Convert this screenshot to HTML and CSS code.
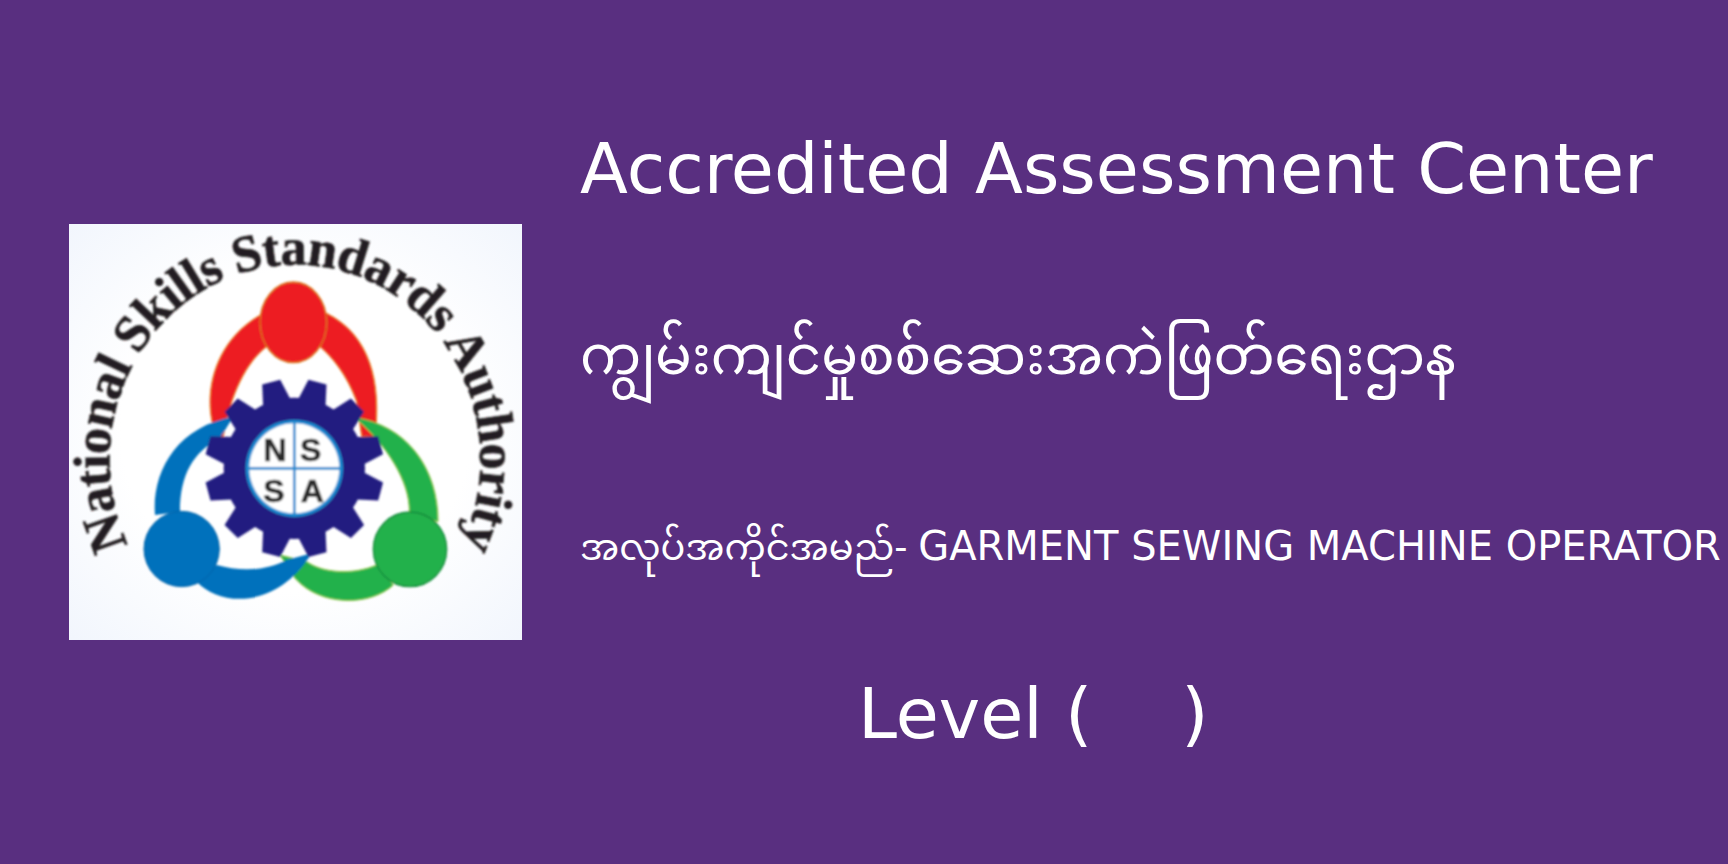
FILE: index.html

```html
<!DOCTYPE html>
<html lang="en">
<head>
  <meta charset="UTF-8">
  <meta name="viewport" content="width=device-width, initial-scale=1.0">
  <title>Accredited Assessment Center</title>
  <link rel="stylesheet" href="styles.css">
</head>
<body>

<div class="banner">
  <svg class="logo" viewBox="27 27 1359 1248" role="img" aria-label="National Skills Standards Authority">
    <defs>
      <radialGradient id="logo-bg" cx="50%" cy="50%" r="70%">
        <stop offset="55%" stop-color="#ffffff"/>
        <stop offset="100%" stop-color="#f2f6fd"/>
      </radialGradient>
      <filter id="soft" x="-5%" y="-5%" width="110%" height="110%">
        <feGaussianBlur stdDeviation="2.8"/>
      </filter>
      <path id="logo-arc" d="M 205 990 A 556 585 0 1 1 1205 990"/>
      <polygon id="gear-teeth" points="675,492 731,492 745,555 745,965 731,1028 675,1028 661,965 661,555"/>
    </defs>
    <rect x="27" y="27" width="1359" height="1248" fill="url(#logo-bg)"/>
    <g filter="url(#soft)">
      <text class="logo-name"><textPath href="#logo-arc">National Skills Standards Authority</textPath></text>

      <!-- red figure -->
      <path fill="#ed1c24" stroke="#e8821e" stroke-width="3" d="M470 665C425 560 450 380 610 295L800 295C930 360 965 500 945 665L905 665L890 560C860 480 820 430 780 395L620 395C560 440 510 540 490 665Z"/>
      <ellipse cx="700" cy="322" rx="100" ry="121" fill="#ed1c24" stroke="#d9761c" stroke-width="4"/>

      <!-- green figure -->
      <path fill="#22b14c" stroke="#8cc63f" stroke-width="3" d="M885 608C1040 630 1135 760 1134 920L1048 890C1050 800 980 690 885 608Z"/>
      <path fill="#22b14c" stroke="#8cc63f" stroke-width="3" d="M1000 1110C930 1175 780 1175 705 1090L660 1020L740 1040C790 1075 880 1080 950 1050Z"/>
      <ellipse cx="1050" cy="1003" rx="110" ry="112" fill="#22b14c" stroke="#178a3a" stroke-width="4"/>

      <!-- blue figure -->
      <path fill="#0071bc" d="M520 605C350 635 275 770 285 900L360 890C360 780 400 710 480 670Z"/>
      <path fill="#0071bc" d="M410 1100C480 1175 650 1185 755 1015L680 1035C620 1068 540 1070 470 1050Z"/>
      <ellipse cx="365" cy="1002" rx="113" ry="113" fill="#0071bc" stroke="#0a62a8" stroke-width="3"/>

      <!-- gear -->
      <g fill="#231f80">
        <circle cx="703" cy="760" r="212"/>
        <use href="#gear-teeth" transform="rotate(15 703 760)"/>
        <use href="#gear-teeth" transform="rotate(45 703 760)"/>
        <use href="#gear-teeth" transform="rotate(75 703 760)"/>
        <use href="#gear-teeth" transform="rotate(105 703 760)"/>
        <use href="#gear-teeth" transform="rotate(135 703 760)"/>
        <use href="#gear-teeth" transform="rotate(165 703 760)"/>
      </g>
      <circle cx="703" cy="760" r="146" fill="#1c8ad0"/>
      <circle cx="703" cy="760" r="135" fill="#ffffff"/>
      <path d="M703 620V900M563 760H843" stroke="#1c8ad0" stroke-width="8"/>
      <g class="logo-letters">
        <text x="645" y="737">N</text>
        <text x="752" y="737">S</text>
        <text x="642" y="860">S</text>
        <text x="757" y="860">A</text>
      </g>
    </g>
  </svg>

  <div class="info">
    <h1 class="title">Accredited Assessment Center</h1>
    <h2 class="title-mm">ကျွမ်းကျင်မှုစစ်ဆေးအကဲဖြတ်ရေးဌာန</h2>
    <p class="occupation"><span class="occupation-label">အလုပ်အကိုင်အမည်-</span> GARMENT SEWING MACHINE OPERATOR</p>
    <p class="level">Level (&nbsp;&nbsp;&nbsp;&nbsp;)</p>
  </div>
</div>

</body>
</html>
```

FILE: styles.css

```css
body {
  margin: 0;
  background: #592f80;
  color: #ffffff;
  font-family: "DejaVu Sans", "Noto Sans Myanmar", sans-serif;
}

.banner {
  height: 864px;
  display: flex;
  align-items: center;
  gap: 58px;
  padding-left: 69px;
  overflow: hidden;
}

.logo {
  width: 453px;
  height: 416px;
  flex-shrink: 0;
}

.logo-name {
  font-family: "Liberation Serif", serif;
  font-weight: 700;
  font-size: 156px;
  letter-spacing: -2px;
  fill: #231f20;
  stroke: #231f20;
  stroke-width: 2px;
}

.logo-letters {
  font-family: "Liberation Sans", sans-serif;
  font-weight: 700;
  font-size: 96px;
  fill: #2b2b2b;
  stroke: #2b2b2b;
  stroke-width: 2px;
  text-anchor: middle;
}

.info {
  flex: 1;
  padding-top: 14px;
  white-space: nowrap;
}

.title {
  margin: 0;
  font-size: 70px;
  font-weight: 400;
  line-height: 84px;
}

.title-mm {
  margin: 103px 0 0;
  font-size: 54.4px;
  font-weight: 400;
  line-height: 84px;
}

.occupation {
  margin: 120px 0 0;
  font-size: 40px;
  line-height: 56px;
}

.occupation-label {
  margin-right: -2px;
  font-size: 36.7px;
}

.level {
  margin: 100px 0 0 278px;
  font-size: 70px;
  line-height: 76px;
}
```
